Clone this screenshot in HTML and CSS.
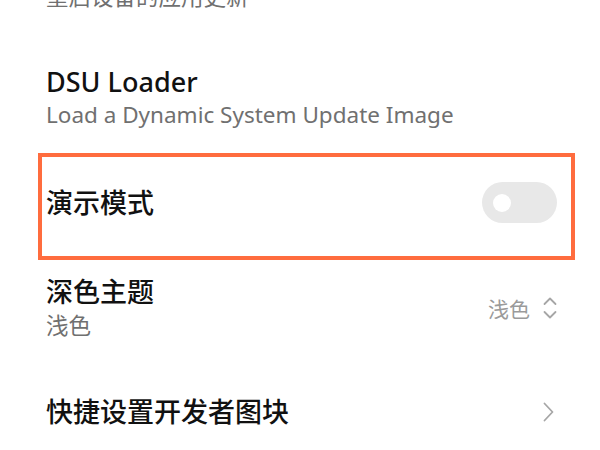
FILE: index.html
```html
<!DOCTYPE html>
<html lang="zh-CN">
<head>
    <meta charset="UTF-8">
    <meta name="viewport" content="width=device-width, initial-scale=1.0">
    <title>开发者选项</title>
    <link rel="stylesheet" href="styles.css">
</head>
<body>
    <div class="settings-list">
        <div class="row row-first">
            <div class="row-text">
                <div class="row-title">重启设备的应用更新</div>
                <div class="row-sub">重启设备的应用更新</div>
            </div>
        </div>

        <div class="row">
            <div class="row-text">
                <div class="row-title">DSU Loader</div>
                <div class="row-sub">Load a Dynamic System Update Image</div>
            </div>
        </div>

        <div class="row highlight">
            <div class="row-text">
                <div class="row-title">演示模式</div>
            </div>
            <div class="toggle">
                <span class="toggle-knob"></span>
            </div>
        </div>

        <div class="row row-theme">
            <div class="row-text">
                <div class="row-title">深色主题</div>
                <div class="row-sub">浅色</div>
            </div>
            <div class="row-value">
                <span>浅色</span>
                <svg class="icon-updown" width="14" height="22" viewBox="0 0 14 22">
                    <polyline points="1.5,7 7,1.5 12.5,7" />
                    <polyline points="1.5,15 7,20.5 12.5,15" />
                </svg>
            </div>
        </div>

        <div class="row row-last">
            <div class="row-text">
                <div class="row-title">快捷设置开发者图块</div>
            </div>
            <svg class="icon-arrow" width="11" height="20" viewBox="0 0 11 20">
                <polyline points="1.5,1.5 9.5,10 1.5,18.5" />
            </svg>
        </div>
    </div>
</body>
</html>
```

FILE: styles.css
```css
body {
    background-color: white;
    margin: 0;
    padding: 0;
    font-family: "Noto Sans", "Noto Sans CJK SC", sans-serif;
    color: #111;
    overflow: hidden;
}
.settings-list {
    margin-top: -80px;
    padding: 0 43px 0 46px;
}
.row {
    display: flex;
    align-items: center;
    justify-content: space-between;
    padding: 26px 0;
}
.row-title {
    font-size: 27px;
    line-height: 36px;
    font-weight: 500;
}
.row-sub {
    font-size: 22.5px;
    line-height: 30px;
    color: #707070;
}
.highlight {
    margin: -3px -18px 0 -8px;
    padding: 25px 14px 33px 4px;
    border: 4px solid rgb(255, 108, 62);
}
.row-theme {
    padding-top: 14px;
}
.row-theme .row-sub {
    line-height: 32px;
}
.row-last {
    padding-top: 26px;
}
.toggle {
    width: 75px;
    height: 41px;
    border-radius: 21px;
    background-color: #e8e8e8;
    display: flex;
    align-items: center;
    padding-left: 11px;
    box-sizing: border-box;
}
.toggle-knob {
    width: 18px;
    height: 18px;
    border-radius: 50%;
    background-color: white;
}
.row-value {
    display: flex;
    align-items: center;
    gap: 13px;
    font-size: 21px;
    color: #9a9a9a;
}
.icon-updown polyline,
.icon-arrow polyline {
    fill: none;
    stroke: #a6a6a6;
    stroke-width: 1.8;
    stroke-linecap: round;
    stroke-linejoin: round;
}
.icon-arrow {
    margin-right: 3px;
}
```
